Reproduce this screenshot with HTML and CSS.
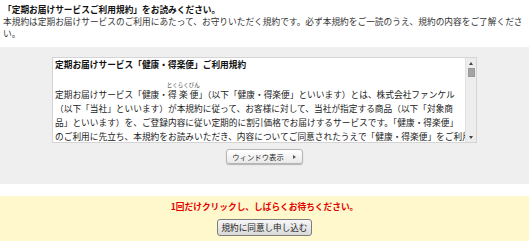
FILE: index.html
```html
<!DOCTYPE html>
<html lang="ja">
<head>
<meta charset="utf-8">
<title>定期お届けサービスご利用規約</title>
<link rel="stylesheet" href="styles.css">
</head>
<body>
<div class="intro">
  <p class="intro-title">「定期お届けサービスご利用規約」をお読みください。</p>
  <p class="intro-text">本規約は定期お届けサービスのご利用にあたって、お守りいただく規約です。必ず本規約をご一読のうえ、規約の内容をご了解ください。</p>
</div>
<div class="terms-panel">
  <div class="terms-box">
    <div class="terms-content">
      <p class="terms-title">定期お届けサービス「健康・得楽便」ご利用規約</p>
      <p class="terms-body">定期お届けサービス「健康・<ruby>得楽便<rt>とくらくびん</rt></ruby>」（以下「健康・得楽便」といいます）とは、株式会社ファンケル<br>（以下「当社」といいます）が本規約に従って、お客様に対して、当社が指定する商品（以下「対象商<br>品」といいます）を、ご登録内容に従い定期的に割引価格でお届けするサービスです。「健康・得楽便」<br>のご利用に先立ち、本規約をお読みいただき、内容についてご同意されたうえで「健康・得楽便」をご利用<br>ください。</p>
    </div>
    <div class="scrollbar">
      <span class="sb-up"></span>
      <span class="sb-thumb"></span>
      <span class="sb-track"></span>
      <span class="sb-down"></span>
    </div>
  </div>
  <button class="window-btn" type="button">ウィンドウ表示<span class="window-arrow"></span></button>
</div>
<div class="submit-panel">
  <p class="notice">1回だけクリックし、しばらくお待ちください。</p>
  <button class="submit-btn" type="button">規約に同意し申し込む</button>
</div>
</body>
</html>
```
FILE: styles.css
```css
html, body {
  margin: 0;
  padding: 0;
  background: #fff;
}
body {
  font-family: "Noto Sans CJK JP", "Noto Sans", sans-serif;
  font-size: 8.7px;
  color: #222;
}
p {
  margin: 0;
}

.intro {
  padding: 4px 3px 0;
}
.intro-title {
  font-weight: bold;
  line-height: 12px;
  color: #111;
}
.intro-text {
  line-height: 12px;
  color: #333;
}

.terms-panel {
  margin-top: 7px;
  background: #efefef;
  padding: 10px 0 20px;
  display: flex;
  flex-direction: column;
  align-items: center;
  gap: 6px;
}
.terms-box {
  width: 425px;
  height: 86px;
  box-sizing: border-box;
  border: 1px solid #d4d4d4;
  background: #fff;
  display: flex;
}
.terms-content {
  flex: 1;
  overflow: hidden;
  padding: 0 2px;
  line-height: 14px;
  white-space: nowrap;
  color: #222;
}
.terms-title {
  font-weight: bold;
  color: #111;
}
.terms-body {
  margin-top: 9px;
}
.terms-body ruby {
  ruby-position: over;
}
.terms-body rt {
  font-size: 5.5px;
  line-height: 6px;
  color: #333;
  padding-bottom: 1px;
}

.scrollbar {
  width: 11px;
  background: #ededed;
  border-left: 1px solid #e2e2e2;
  display: flex;
  flex-direction: column;
  align-items: center;
  padding: 4px 0 3px;
  box-sizing: border-box;
}
.sb-up {
  width: 0;
  height: 0;
  border-left: 2px solid transparent;
  border-right: 2px solid transparent;
  border-bottom: 3px solid #444;
}
.sb-thumb {
  margin-top: 3px;
  width: 7px;
  height: 9px;
  background: #a3a3a3;
  border: 1px solid #999;
  box-sizing: border-box;
}
.sb-track {
  flex: 1;
}
.sb-down {
  width: 0;
  height: 0;
  border-left: 2px solid transparent;
  border-right: 2px solid transparent;
  border-top: 3px solid #444;
}

.window-btn {
  display: flex;
  align-items: center;
  gap: 9px;
  height: 15px;
  box-sizing: border-box;
  padding: 0 6px 0 5px;
  font-family: inherit;
  font-size: 7.4px;
  line-height: 1;
  color: #222;
  border: 1px solid #b5b5b5;
  border-radius: 3px;
  background: linear-gradient(#ffffff, #e9e9e9);
  box-shadow: 0 1px 1px rgba(0, 0, 0, 0.25);
}
.window-arrow {
  width: 0;
  height: 0;
  border-top: 2px solid transparent;
  border-bottom: 2px solid transparent;
  border-left: 3px solid #555;
}

.submit-panel {
  margin-top: 12px;
  background: #fff8cc;
  padding: 5px 0 6px;
  display: flex;
  flex-direction: column;
  align-items: center;
  gap: 6px;
}
.notice {
  line-height: 12px;
  font-weight: bold;
  color: #e40000;
}
.submit-btn {
  height: 17px;
  box-sizing: border-box;
  padding: 0 4px;
  font-family: inherit;
  font-size: 8.6px;
  line-height: 1;
  color: #222;
  border: 1px solid #7d7d7d;
  border-radius: 3px;
  background: linear-gradient(#f7f7f7, #d9d9d9);
}
```
